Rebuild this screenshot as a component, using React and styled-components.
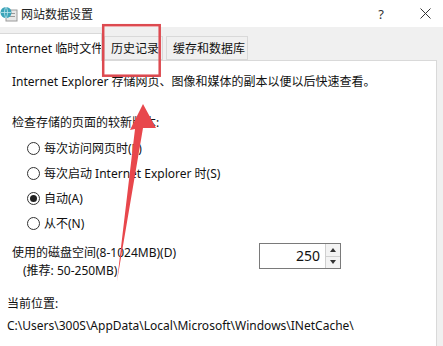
import styled, { createGlobalStyle } from "styled-components";

const GlobalStyle = createGlobalStyle`
  html, body {
    margin: 0;
    padding: 0;
    background: #f0f0f0;
  }
  body {
    font-family: "Noto Sans", "Noto Sans CJK SC", sans-serif;
    font-size: 12px;
    color: #111;
  }
`;

const Window = styled.div`
  position: relative;
  width: 443px;
  height: 346px;
  overflow: hidden;
  display: flex;
  flex-direction: column;
  background: #f0f0f0;
`;

const TitleBar = styled.div`
  height: 27px;
  flex-shrink: 0;
  background: #fff;
  display: flex;
  align-items: center;
  padding-right: 12px;
`;

const TitleText = styled.span`
  margin-left: 3px;
  font-size: 12px;
  color: #222;
  flex: 1;
`;

const HelpBtn = styled.span`
  font-size: 13px;
  color: #333;
  margin-right: 36px;
`;

const TabStrip = styled.div`
  height: 33px;
  flex-shrink: 0;
  display: flex;
  align-items: flex-end;
  position: relative;
  z-index: 1;
`;

const Tab = styled.div`
  box-sizing: border-box;
  width: ${(p) => p.$w}px;
  height: ${(p) => (p.$active ? "28px" : "24px")};
  margin-bottom: ${(p) => (p.$active ? "-1px" : "0")};
  margin-left: ${(p) => p.$gap || 0}px;
  padding-left: 6px;
  display: flex;
  align-items: center;
  background: ${(p) => (p.$active ? "#fff" : "#f0f0f0")};
  border: 1px solid #d9d9d9;
  border-bottom: ${(p) => (p.$active ? "none" : "1px solid #d9d9d9")};
  border-left: ${(p) => (p.$active ? "none" : "1px solid #d9d9d9")};
  color: #111;
  white-space: nowrap;
  overflow: hidden;
`;

const Panel = styled.div`
  flex: 1;
  background: #fff;
  border-top: 1px solid #d9d9d9;
  border-right: 1px solid #d9d9d9;
  margin-right: 6px;
  padding: 12px 0 0 7px;
  display: flex;
  flex-direction: column;
`;

const Group = styled.div`
  padding-left: 5px;
  display: flex;
  flex-direction: column;
`;

const Line = styled.div`
  line-height: 18px;
  height: 18px;
  margin-top: ${(p) => p.$top || 0}px;
  padding-left: ${(p) => p.$indent || 0}px;
  white-space: nowrap;
`;

const RadioList = styled.div`
  margin-top: 7px;
  padding-left: 15px;
  display: flex;
  flex-direction: column;
  gap: 7px;
`;

const RadioRow = styled.label`
  display: flex;
  align-items: center;
  height: 18px;
  gap: 4px;
  white-space: nowrap;
`;

const RadioDot = styled.span`
  box-sizing: border-box;
  width: 13px;
  height: 13px;
  border-radius: 50%;
  border: 1px solid #333;
  background: #fff;
  display: flex;
  align-items: center;
  justify-content: center;
  &::after {
    content: "";
    width: 7px;
    height: 7px;
    border-radius: 50%;
    background: ${(p) => (p.$checked ? "#222" : "transparent")};
  }
`;

const DiskRow = styled.div`
  margin-top: 11px;
  display: flex;
  align-items: flex-start;
`;

const DiskLabel = styled.div`
  width: 247px;
  display: flex;
  flex-direction: column;
  padding-top: 1px;
`;

const SpinBox = styled.div`
  box-sizing: border-box;
  width: 82px;
  height: 26px;
  border: 1px solid #7a7a7a;
  display: flex;
  background: #fff;
`;

const SpinValue = styled.div`
  flex: 1;
  text-align: right;
  padding-right: 5px;
  line-height: 24px;
  font-size: 14px;
  color: #111;
`;

const SpinButtons = styled.div`
  width: 14px;
  display: flex;
  flex-direction: column;
  border-left: 1px solid #cfcfcf;
`;

const SpinArrow = styled.div`
  flex: 1;
  display: flex;
  align-items: center;
  justify-content: center;
  background: #f3f3f3;
  border-bottom: ${(p) => (p.$up ? "1px solid #d0d0d0" : "none")};
  &::after {
    content: "";
    border-left: 3px solid transparent;
    border-right: 3px solid transparent;
    ${(p) => (p.$up ? "border-bottom: 4px solid #333;" : "border-top: 4px solid #333;")}
  }
`;

const Overlay = styled.svg`
  position: absolute;
  left: 0;
  top: 0;
  pointer-events: none;
  z-index: 5;
`;

function AppIcon() {
  return (
    <svg width="18" height="16" viewBox="0 0 18 16">
      <rect x="6" y="4" width="11" height="11" fill="#e8e8e8" stroke="#9a9a9a" />
      <rect x="8" y="7" width="7" height="1" fill="#9a9a9a" />
      <rect x="8" y="10" width="7" height="1" fill="#9a9a9a" />
      <circle cx="6" cy="6.5" r="5.5" fill="#3aa3b8" />
      <path d="M1 6.5h10M6 1c-2 3-2 8 0 11M6 1c2 3 2 8 0 11" stroke="#bfe6ee" strokeWidth="0.8" fill="none" />
    </svg>
  );
}

function CloseIcon() {
  return (
    <svg width="11" height="11" viewBox="0 0 11 11">
      <path d="M0.5 0.5l10 10M10.5 0.5l-10 10" stroke="#333" strokeWidth="1" />
    </svg>
  );
}

const options = [
  { label: "每次访问网页时(E)" },
  { label: "每次启动 Internet Explorer 时(S)" },
  { label: "自动(A)", checked: true },
  { label: "从不(N)" },
];

export default function App() {
  return (
    <>
      <GlobalStyle />
      <Window>
        <TitleBar>
          <AppIcon />
          <TitleText>网站数据设置</TitleText>
          <HelpBtn>?</HelpBtn>
          <CloseIcon />
        </TitleBar>
        <TabStrip>
          <Tab $active $w={102}>Internet 临时文件</Tab>
          <Tab $gap={2} $w={59}>历史记录</Tab>
          <Tab $gap={3} $w={82}>缓存和数据库</Tab>
        </TabStrip>
        <Panel>
          <Group>
            <Line>Internet Explorer 存储网页、图像和媒体的副本以便以后快速查看。</Line>
            <Line $top={23}>检查存储的页面的较新版本:</Line>
            <RadioList>
              {options.map((o) => (
                <RadioRow key={o.label}>
                  <RadioDot $checked={o.checked} />
                  {o.label}
                </RadioRow>
              ))}
            </RadioList>
            <DiskRow>
              <DiskLabel>
                <Line>使用的磁盘空间(8-1024MB)(D)</Line>
                <Line $indent={11}>(推荐: 50-250MB)</Line>
              </DiskLabel>
              <SpinBox>
                <SpinValue>250</SpinValue>
                <SpinButtons>
                  <SpinArrow $up />
                  <SpinArrow />
                </SpinButtons>
              </SpinBox>
            </DiskRow>
          </Group>
          <Line $top={15}>当前位置:</Line>
          <Line $top={4}>C:\Users\300S\AppData\Local\Microsoft\Windows\INetCache\</Line>
        </Panel>
        <Overlay width="443" height="346" viewBox="0 0 443 346">
          <rect x="103.2" y="25.2" width="56.5" height="50.5" fill="none" stroke="#dd4a50" strokeWidth="2.5" />
          <polygon
            points="143,104 156,128 143,128 117,281 135,129 130,130"
            fill="#e8474c"
          />
        </Overlay>
      </Window>
    </>
  );
}
